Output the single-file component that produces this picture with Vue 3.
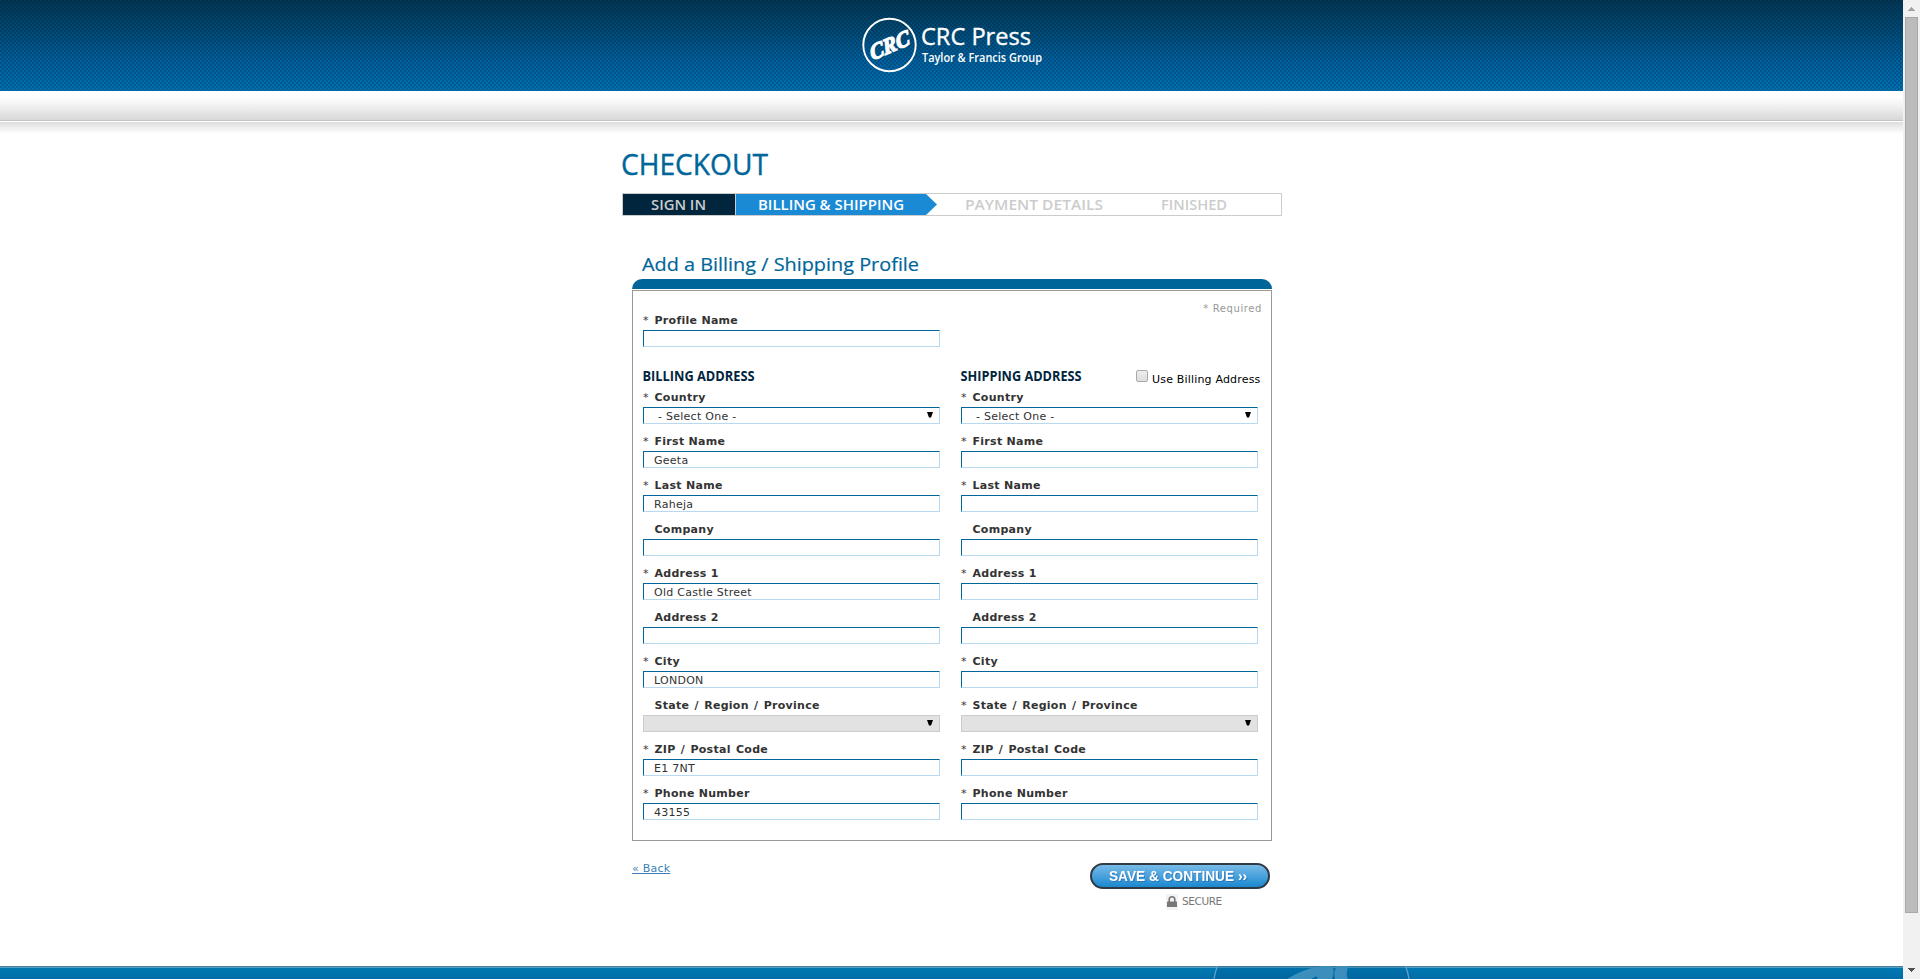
<script setup>
import { reactive } from 'vue'

const steps = [
  { text: 'SIGN IN', kind: 'done', len: 55 },
  { text: 'BILLING & SHIPPING', kind: 'current', len: 146 },
  { text: 'PAYMENT DETAILS', kind: 'payment', len: 138 },
  { text: 'FINISHED', kind: 'finished', len: 66 }
]

const makeFields = (v, stateRequired) => [
  { label: 'Country', req: true, type: 'select', value: '- Select One -' },
  { label: 'First Name', req: true, value: v.first },
  { label: 'Last Name', req: true, value: v.last },
  { label: 'Company', req: false, value: '' },
  { label: 'Address 1', req: true, value: v.address },
  { label: 'Address 2', req: false, value: '' },
  { label: 'City', req: true, value: v.city },
  { label: 'State / Region / Province', req: stateRequired, type: 'select', disabled: true, value: '' },
  { label: 'ZIP / Postal Code', req: true, value: v.zip },
  { label: 'Phone Number', req: true, value: v.phone }
]

const columns = reactive([
  {
    title: 'BILLING ADDRESS',
    len: 112,
    fields: makeFields({ first: 'Geeta', last: 'Raheja', address: 'Old Castle Street', city: 'LONDON', zip: 'E1 7NT', phone: '43155' }, false)
  },
  {
    title: 'SHIPPING ADDRESS',
    len: 121,
    copy: true,
    fields: makeFields({ first: '', last: '', address: '', city: '', zip: '', phone: '' }, true)
  }
])
</script>

<template>
  <div class="window">
    <div class="page">
      <header class="banner">
        <svg class="logo" width="190" height="60" viewBox="0 0 190 60">
          <circle cx="29.500" cy="30" r="26.200" fill="none" stroke="#fff" stroke-width="1.9" />
          <g transform="translate(29.500 30) rotate(-23) skewX(-8)">
            <text x="-21" y="7.500" textLength="42" lengthAdjust="spacingAndGlyphs" class="crc">CRC</text>
          </g>
          <text x="61" y="29.500" textLength="110" lengthAdjust="spacingAndGlyphs" class="press">CRC Press</text>
          <text x="62" y="46.500" textLength="120" lengthAdjust="spacingAndGlyphs" class="group">Taylor &amp; Francis Group</text>
        </svg>
      </header>
      <div class="strip"></div>
      <div class="shade"></div>

      <main class="content">
        <h1 class="title">
          <svg width="150" height="34"><text x="-1" y="27" textLength="147" lengthAdjust="spacingAndGlyphs">CHECKOUT</text></svg>
        </h1>

        <ol class="steps">
          <li v-for="s in steps" :key="s.text" :class="['step', s.kind]">
            <svg :width="s.len" height="21"><text x="0" y="15.500" :textLength="s.len" lengthAdjust="spacingAndGlyphs">{{ s.text }}</text></svg>
          </li>
        </ol>

        <section class="profile">
          <h2 class="subtitle">
            <svg width="280" height="28"><text x="0" y="20" textLength="277" lengthAdjust="spacingAndGlyphs">Add a Billing / Shipping Profile</text></svg>
          </h2>
          <div class="cap"></div>
          <form class="panel" @submit.prevent>
            <div class="top">
              <div class="field">
                <label><span class="star">*</span>Profile Name</label>
                <input type="text" />
              </div>
              <span class="required">* Required</span>
            </div>
            <div class="columns">
              <div v-for="c in columns" :key="c.title" class="column">
                <div class="head">
                  <h3><svg :width="c.len" height="16"><text x="-0.500" y="12" :textLength="c.len" lengthAdjust="spacingAndGlyphs">{{ c.title }}</text></svg></h3>
                  <div v-if="c.copy" class="copy"><span class="box"></span><span class="copytext">Use Billing Address</span></div>
                </div>
                <div v-for="f in c.fields" :key="f.label" class="field">
                  <label :class="{ wide: f.label.includes('/') }"><span class="star">{{ f.req ? '*' : '' }}</span>{{ f.label }}</label>
                  <div v-if="f.type === 'select'" :class="['select', { disabled: f.disabled }]">
                    <span>{{ f.value }}</span>
                    <svg width="6" height="6" viewBox="0 0 6 6"><path d="M0 0H6L4 5.500H2Z" fill="#000" /></svg>
                  </div>
                  <input v-else v-model="f.value" type="text" />
                </div>
              </div>
            </div>
          </form>
          <div class="actions">
            <a class="back">« Back</a>
            <div class="save">
              <button type="button">
                <svg width="140" height="22"><text x="-1" y="15" textLength="138" lengthAdjust="spacingAndGlyphs">SAVE &amp; CONTINUE ››</text></svg>
              </button>
              <div class="secure">
                <svg width="12" height="16" viewBox="0 0 12 16">
                  <rect width="12" height="16" fill="#f3f3f3" />
                  <path d="M3.200 8V5.600a2.800 2.800 0 0 1 5.600 0V8" fill="none" stroke="#777" stroke-width="1.600" />
                  <rect x="1" y="7.500" width="10" height="5.500" rx=".6" fill="#777" />
                </svg>
                <span>SECURE</span>
              </div>
            </div>
          </div>
        </section>
      </main>

      <footer class="footer">
        <svg width="220" height="13" viewBox="0 0 220 13">
          <path d="M17.500 0L14 13H210L206.500 0Z" fill="#004f86" opacity=".18" />
          <path d="M17.500 0Q15 6 14 13M205.500 0Q208 6 209 13" fill="none" stroke="#5fa3c9" stroke-width="1.300" />
          <path d="M87 13Q105 2 122 0H130Q136 1 132 13H117Q119 8 111 13ZM137 0H149Q145 6 148 13H135Q133 6 137 0Z" fill="#3c8fbd" />
        </svg>
      </footer>
    </div>

    <aside class="scrollbar">
      <svg width="7" height="4" viewBox="0 0 7 4"><path d="M3 0H4V1H5V2H6V3H7V4H0V3H1V2H2V1H3Z" fill="#a3a3a3" /></svg>
      <div class="thumb"></div>
      <svg width="7" height="4" viewBox="0 0 7 4"><path d="M0 0H7V1H6V2H5V3H4V4H3V3H2V2H1V1H0Z" fill="#505050" /></svg>
    </aside>
  </div>
</template>

<style>
body { margin: 0; overflow: hidden; background: #fff; }
</style>

<style scoped>
.window { display: flex; width: 1920px; height: 979px; overflow: hidden; font: 11px/14px "DejaVu Sans", sans-serif; letter-spacing: .22px; color: #333; background: #fff; }
.window * { box-sizing: border-box; }
svg { display: block; overflow: visible; flex: none; }
h1, h2, h3, ol { margin: 0; padding: 0; font-weight: normal; list-style: none; }
.page { width: 1903px; height: 979px; display: flex; flex-direction: column; }

.banner {
  height: 91px; flex: none; padding: 15px 0 0 860px;
  background:
    repeating-conic-gradient(rgba(0, 30, 60, .22) 0 25%, rgba(0, 130, 170, .1) 0 50%) 0 0 / 4px 4px,
    linear-gradient(#02304b, #00446d 32%, #005c9a 68%, #006fb0);
}
.logo text { fill: #fff; font-family: "Open Sans", sans-serif; letter-spacing: 0; }
.logo .press { font-size: 24px; stroke: #fff; stroke-width: .35; }
.logo .group { font-size: 12px; font-weight: 600; }
.logo .crc { font-family: "Liberation Serif", serif; font-weight: bold; font-style: italic; font-size: 22px; stroke: #fff; stroke-width: 1.3; }
.strip { height: 31px; flex: none; background: linear-gradient(#fff 0, #fff 20%, #f1f1f1 50%, #d6d6d6 100%); border-bottom: 1px solid #fff; box-shadow: inset 0 -1px #c4c4c4; }
.shade { height: 12px; flex: none; background: linear-gradient(#dedede, #fff); }

.content { width: 660px; margin: 0 0 0 622px; padding-top: 14px; flex: 1; }
.title { height: 45px; }
.title text { fill: #069; stroke: #069; stroke-width: .4; font: 29.500px "Open Sans", sans-serif; letter-spacing: 0; }
.steps { display: flex; height: 23px; border: 1px solid #ccc; }
.step { display: flex; color: #ccc; }
.step text { fill: currentColor; font: 600 14.500px "Open Sans", sans-serif; letter-spacing: 0; }
.done { width: 113px; padding-left: 28px; background: #00253d; border-right: 1px solid #ccc; }
.current { width: 201px; padding-left: 22px; color: #fff; background: #1b8ad5; clip-path: polygon(0 0, 190px 0, 100% 50%, 190px 100%, 0 100%); }
.payment { width: 224px; padding-left: 28px; }

.profile { width: 640px; margin: 35px 10px 0; }
.subtitle { height: 28px; padding-left: 10px; }
.subtitle text { fill: #069; stroke: #069; stroke-width: .2; font: 19px "Open Sans", sans-serif; letter-spacing: 0; }
.cap { height: 10px; background: #069; border-radius: 10px 10px 0 0; margin-bottom: 1px; }
.panel { height: 551px; border: 1px solid #999; padding: 12px 9px 0 10px; }
.top { display: flex; justify-content: space-between; }
.required { font-size: 10px; line-height: 12px; color: #999; letter-spacing: .6px; }
.field { width: 297px; height: 44px; padding-top: 11px; }
label { display: flex; height: 14px; margin-bottom: 2px; font-weight: bold; padding-left: 0; letter-spacing: .28px; white-space: nowrap; }
.wide { word-spacing: 1.200px; }
.star { width: 11.500px; font-weight: normal; }
input, .select { display: block; width: 297px; height: 17px; margin: 0; padding: 1px 10px 0; border: 1px solid; border-color: #069 #b8d9f0 #b8d9f0 #069; border-radius: 0; background: #fff; color: #333; font: 11px/14px "DejaVu Sans", sans-serif; letter-spacing: .26px; outline: none; }
.select { display: flex; justify-content: space-between; padding: 2px 6px 0 14px; }
.select svg { margin-top: 2px; }
.disabled { background: #e2e2e2; border-color: #ccc; }
.columns { display: flex; gap: 21px; margin-top: 22px; }
.column { width: 297px; }
.head { display: flex; justify-content: space-between; height: 11px; width: 300px; }
h3 text { fill: #00253d; font: bold 13.500px "Open Sans", sans-serif; letter-spacing: 0; }
.copy { display: flex; gap: 4px; color: #000; white-space: nowrap; width: 125px; }
.box { width: 12px; height: 12px; flex: none; margin-top: 1px; border: 1px solid #aaa; border-radius: 2px; background: linear-gradient(#eee, #ddd); }
.copytext { margin-top: 4px; letter-spacing: .18px; }

.actions { display: flex; justify-content: space-between; padding: 20px 2px 0 0; }
.back { margin-top: 1px; color: #3d7fb8; text-decoration: underline; }
.save { width: 180px; padding-top: 2px; }
button { display: flex; width: 180px; height: 26px; padding: 1px 0 0 18px; border: 2px solid #2f3a43; border-radius: 13px; background: linear-gradient(#78bbe8, #1b88d0); }
button text { fill: #fff; font: bold 14px "Liberation Sans", sans-serif; letter-spacing: 0; filter: drop-shadow(1px 1px 0 rgba(20, 70, 140, .4)); }
.secure { display: flex; padding: 5px 0 0 76px; gap: 4px; color: #777; font: 10.500px/14px "DejaVu Sans", sans-serif; letter-spacing: -.4px; }
.secure span { margin-top: 0; }

.footer { height: 13px; flex: none; padding-left: 1200px; overflow: hidden; background: linear-gradient(#477f9e 0 1px, #559fc4 1px 2px, #0079b3 2px, #006ca7 100%); }

.scrollbar { width: 17px; height: 979px; background: #f1f1f1; display: flex; flex-direction: column; align-items: center; justify-content: space-between; padding: 7px 0; }
.thumb { width: 13px; height: 896px; margin: 6px 0 auto; background: #bcbcbc; border: 1px solid #a8a8a8; }
</style>
